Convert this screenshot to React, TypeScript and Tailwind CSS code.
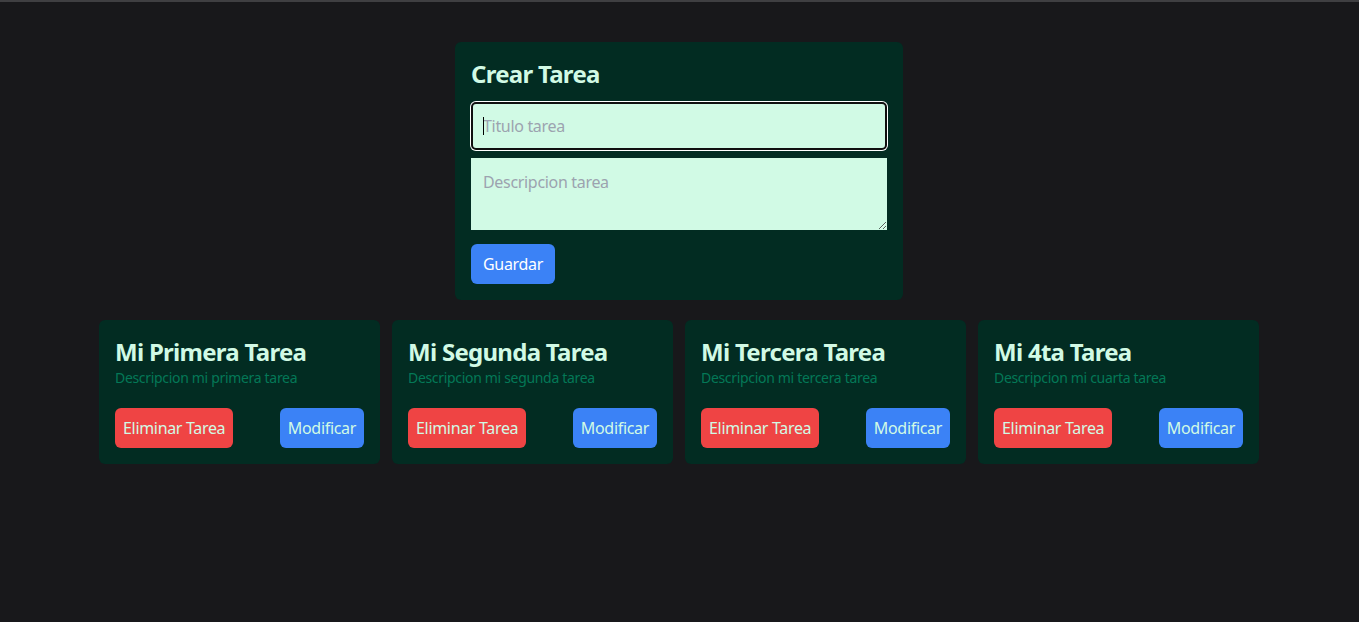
import React from "react";

const tasks = [
  { t: "Mi Primera Tarea", d: "Descripcion mi primera tarea" },
  { t: "Mi Segunda Tarea", d: "Descripcion mi segunda tarea" },
  { t: "Mi Tercera Tarea", d: "Descripcion mi tercera tarea" },
  { t: "Mi 4ta Tarea", d: "Descripcion mi cuarta tarea" },
];

export default function App() {
  return (
    <div
      className="min-h-[622px] bg-[#18181b] border-t-2 border-[#3f3f42] pt-10 pr-px tracking-[-0.02em]"
      style={{ fontFamily: "'Noto Sans', sans-serif" }}
    >
      <form className="mx-auto w-[448px] rounded-md bg-[#022c22] p-4">
        <h1 className="mb-3 text-2xl font-bold leading-8 tracking-[-0.03em] text-[#d1fae5]">Crear Tarea</h1>
        <div className="relative mb-2">
          <input
            placeholder="Titulo tarea"
            className="block h-12 w-full rounded-[5px] border-2 border-[#101010] bg-[#d1fae5] px-[10px] text-base tracking-[-0.02em] shadow-[0_0_0_1px_#ffffff] outline-none placeholder:text-[#9ca3af]"
          />
          <span className="pointer-events-none absolute left-[12px] top-[15px] h-[18px] w-px bg-black" />
        </div>
        <textarea
          placeholder="Descripcion tarea"
          rows={2}
          className="mb-3.5 block w-full bg-[#d1fae5] p-3 text-base leading-6 tracking-[-0.02em] outline-none placeholder:text-[#9ca3af]"
        />
        <button type="button" className="rounded-md bg-[#3b82f6] px-3 py-2 text-base leading-6 tracking-[-0.02em] text-white">
          Guardar
        </button>
      </form>
      <div className="mx-auto mt-5 grid w-[1160px] grid-cols-4 gap-3">
        {tasks.map((x) => (
          <div key={x.t} className="rounded-md bg-[#022c22] p-4 text-[#d1fae5]">
            <h2 className="text-2xl font-bold leading-8 tracking-[-0.03em]">{x.t}</h2>
            <p className="text-sm leading-5 text-[#047857]">{x.d}</p>
            <div className="mt-5 flex justify-between">
              <button className="rounded-md bg-[#ef4444] px-2 py-2 text-base leading-6 tracking-[-0.02em]">Eliminar Tarea</button>
              <button className="rounded-md bg-[#3b82f6] px-2 py-2 text-base leading-6 tracking-[-0.02em]">Modificar</button>
            </div>
          </div>
        ))}
      </div>
    </div>
  );
}
